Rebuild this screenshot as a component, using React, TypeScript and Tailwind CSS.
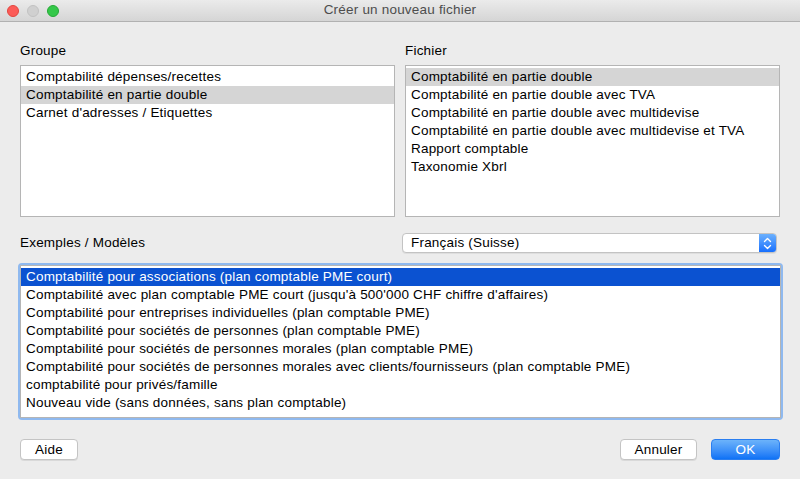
import React from 'react';

const groupes = [
  'Comptabilité dépenses/recettes',
  'Comptabilité en partie double',
  "Carnet d'adresses / Etiquettes",
];

const fichiers = [
  'Comptabilité en partie double',
  'Comptabilité en partie double avec TVA',
  'Comptabilité en partie double avec multidevise',
  'Comptabilité en partie double avec multidevise et TVA',
  'Rapport comptable',
  'Taxonomie Xbrl',
];

const exemples = [
  'Comptabilité pour associations (plan comptable PME court)',
  "Comptabilité avec plan comptable PME court (jusqu'à 500'000 CHF chiffre d'affaires)",
  'Comptabilité pour entreprises individuelles (plan comptable PME)',
  'Comptabilité pour sociétés de personnes (plan comptable PME)',
  'Comptabilité pour sociétés de personnes morales (plan comptable PME)',
  'Comptabilité pour sociétés de personnes morales avec clients/fournisseurs (plan comptable PME)',
  'comptabilité pour privés/famille',
  'Nouveau vide (sans données, sans plan comptable)',
];

function ListBox({ items, selected, active }: { items: string[]; selected: number; active?: boolean }) {
  return (
    <div className="flex-1 bg-white border border-[#b5b5b5] py-[2px] overflow-hidden">
      {items.map((t, i) => {
        const sel = i === selected;
        let cls = 'text-black';
        if (sel) cls = active ? 'bg-[#0b52d1] text-white' : 'bg-[#d5d5d5] text-black';
        return (
          <div key={t} className={`h-[18px] leading-[18px] px-[5px] whitespace-nowrap ${cls}`}>
            {t}
          </div>
        );
      })}
    </div>
  );
}

export default function App() {
  return (
    <div
      className="w-[800px] h-[479px] bg-[#ececec] flex flex-col text-[13.5px] tracking-[0.2px] text-black overflow-hidden"
      style={{ fontFamily: '"Liberation Sans", Arial, sans-serif' }}
    >
      {/* title bar */}
      <div className="h-[22px] shrink-0 bg-gradient-to-b from-[#ebebeb] to-[#d5d5d5] border-b border-[#b1b1b1] flex items-center relative">
        <div className="flex gap-[8px] pl-[7px]">
          <span className="w-[12px] h-[12px] rounded-full bg-[#fc5b57] border border-[#e2463f]" />
          <span className="w-[12px] h-[12px] rounded-full bg-[#d0d0d0] border border-[#c2c2c2]" />
          <span className="w-[12px] h-[12px] rounded-full bg-[#35c84a] border border-[#26a936]" />
        </div>
        <div className="absolute inset-0 flex items-center justify-center text-[#4d4d4d] pointer-events-none">
          Créer un nouveau fichier
        </div>
      </div>

      {/* body */}
      <div className="flex-1 flex flex-col px-[20px] pt-[20px]">
        <div className="flex gap-[10px]">
          <div className="w-[375px] flex flex-col">
            <div className="h-[17px] leading-[17px] mb-[6px]">Groupe</div>
            <div className="h-[152px] flex">
              <ListBox items={groupes} selected={1} />
            </div>
          </div>
          <div className="w-[375px] flex flex-col">
            <div className="h-[17px] leading-[17px] mb-[6px]">Fichier</div>
            <div className="h-[152px] flex">
              <ListBox items={fichiers} selected={0} />
            </div>
          </div>
        </div>

        <div className="flex items-center mt-[16px] h-[20px]">
          <div className="w-[382px]">Exemples / Modèles</div>
          <div className="w-[375px] h-[20px] bg-white border border-[#c3c3c3] rounded-[4px] flex items-center shadow-[0_1px_0_rgba(0,0,0,0.06)] overflow-hidden">
            <span className="flex-1 pl-[8px]">Français (Suisse)</span>
            <span className="w-[17px] h-full bg-gradient-to-b from-[#6bb0fd] to-[#166ffd] flex items-center justify-center">
              <svg width="9" height="13" viewBox="0 0 9 13" fill="none" stroke="white" strokeWidth="1.4" strokeLinecap="round" strokeLinejoin="round">
                <path d="M1.5 4.5 L4.5 1.5 L7.5 4.5" />
                <path d="M1.5 8.5 L4.5 11.5 L7.5 8.5" />
              </svg>
            </span>
          </div>
        </div>

        <div className="mt-[12px] h-[153px] flex rounded-[2px] shadow-[0_0_0_2px_#8fb9ef] mr-[-1px]">
          <ListBox items={exemples} selected={0} active />
        </div>

        <div className="flex items-center mt-[21px]">
          <button className="w-[58px] h-[21px] bg-white border border-[#c4c4c4] rounded-[4px] shadow-[0_1px_0_rgba(0,0,0,0.08)] leading-none">
            Aide
          </button>
          <div className="flex-1" />
          <button className="w-[77px] h-[21px] bg-white border border-[#c4c4c4] rounded-[4px] shadow-[0_1px_0_rgba(0,0,0,0.08)] leading-none">
            Annuler
          </button>
          <button className="ml-[14px] w-[69px] h-[21px] rounded-[4px] bg-gradient-to-b from-[#6cb3fa] to-[#0c72f6] border border-[#2a7ef0] text-white leading-none">
            OK
          </button>
        </div>
      </div>
    </div>
  );
}
